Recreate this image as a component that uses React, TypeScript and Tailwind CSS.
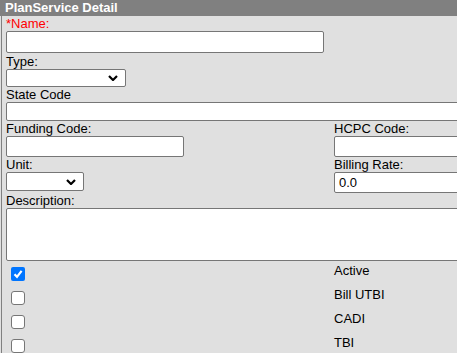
import React from "react";

const font = { fontFamily: '"Liberation Sans", Arial, sans-serif' };

function Chevron() {
  return (
    <svg width="10" height="6" viewBox="0 0 10 6" className="pointer-events-none absolute right-[7px] top-1/2 -translate-y-1/2">
      <path d="M1 1 L5 5 L9 1" fill="none" stroke="#000" strokeWidth="2.2" />
    </svg>
  );
}

function Select({ w }: { w: string }) {
  return (
    <div className={`relative ${w} h-[18px] bg-white border border-[#767676] rounded-[2px]`}>
      <Chevron />
    </div>
  );
}

function Checkbox({ checked }: { checked?: boolean }) {
  return checked ? (
    <div className="w-[14px] h-[14px] rounded-[2px] bg-[#0075ff] flex items-center justify-center">
      <svg width="10" height="10" viewBox="0 0 10 10">
        <path d="M1.5 5.2 L4 7.8 L8.6 1.8" fill="none" stroke="#fff" strokeWidth="2.2" />
      </svg>
    </div>
  ) : (
    <div className="w-[14px] h-[14px] rounded-[3px] bg-white border border-[#767676]" />
  );
}

export default function App() {
  const base = "h-[15px] leading-[15px] text-[13px] whitespace-nowrap";
  const label = `${base} text-black`;
  const input = "bg-white border border-[#767676] rounded-[2px]";
  return (
    <div className="w-[457px] h-[353px] overflow-hidden bg-[#e0e0e0]" style={font}>
      <div className="h-[16px] bg-[#808080] text-white font-bold text-[13px] leading-[16px] pl-[5px] whitespace-nowrap">
        PlanService Detail
      </div>
      <div className="ml-[1px] border-l border-[#808080] pl-[4px] h-[337px]">
        <div className={`${base} text-[#ff0000]`}>*Name:</div>
        <div className={`${input} w-[318px] h-[22px]`} />
        <div className={`${label} mt-[1px]`}>Type:</div>
        <Select w="w-[120px]" />
        <div className={label}>State Code</div>
        <div className={`${input} w-[470px] h-[19px]`} />
        <div className="flex">
          <div className="w-[328px] shrink-0">
            <div className={label}>Funding Code:</div>
            <div className={`${input} w-[178px] h-[21px]`} />
            <div className={label}>Unit:</div>
            <div className="h-[21px]">
              <div className={`relative w-[78px] h-[19px] bg-white border border-[#767676] rounded-[2px]`}>
                <Chevron />
              </div>
            </div>
          </div>
          <div className="shrink-0">
            <div className={label}>HCPC Code:</div>
            <div className={`${input} w-[140px] h-[21px]`} />
            <div className={label}>Billing Rate:</div>
            <div className={`${input} w-[140px] h-[21px] text-[13px] leading-[19px] pl-[4px] text-black`}>0.0</div>
          </div>
        </div>
        <div className={label}>Description:</div>
        <div className={`${input} w-[470px] h-[53px]`} />
        {[
          ["Active", true],
          ["Bill UTBI", false],
          ["CADI", false],
          ["TBI", false],
        ].map(([name, checked]) => (
          <div key={name as string} className="flex h-[24px]">
            <div className="w-[328px] shrink-0 pl-[5px] pt-[6px]">
              <Checkbox checked={checked as boolean} />
            </div>
            <div className={`${label} pt-[2px]`}>{name as string}</div>
          </div>
        ))}
      </div>
    </div>
  );
}
